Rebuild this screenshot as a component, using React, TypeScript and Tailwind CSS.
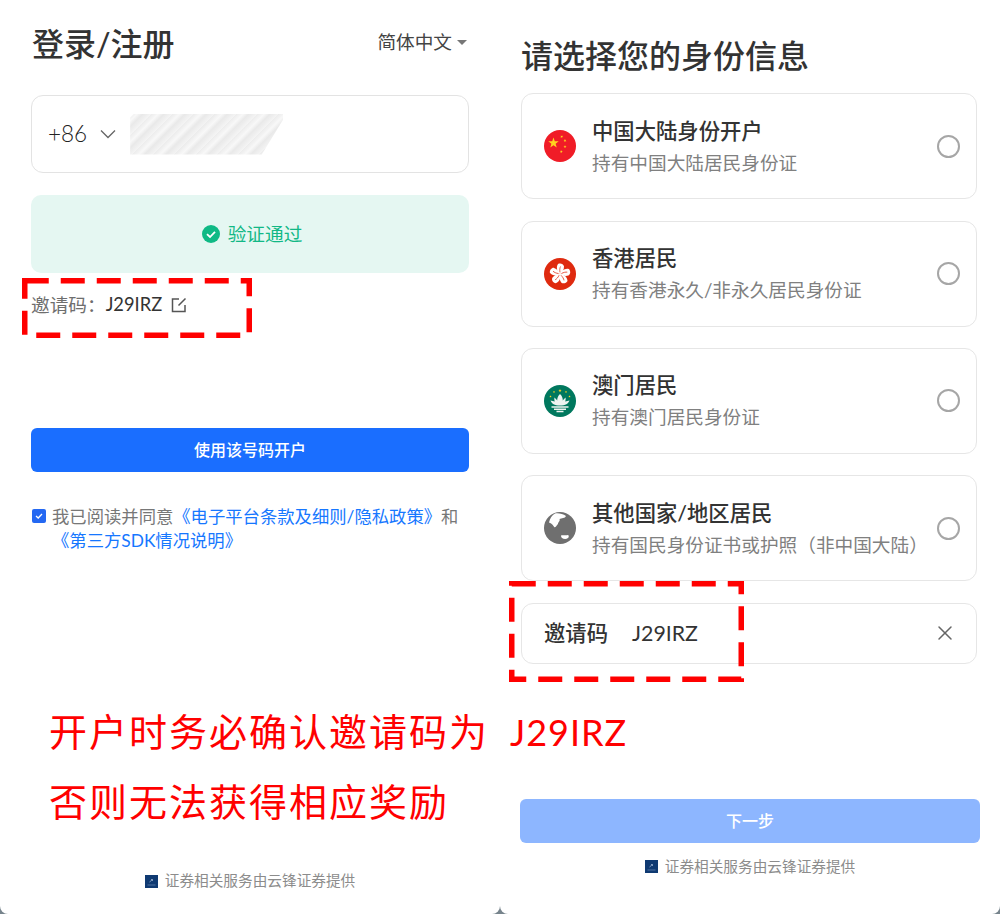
import { X } from 'lucide-react';

const FONT = "font-['Lato','Noto_Sans_CJK_SC',sans-serif]";

const identities = [
    { flag: 'cn', title: '中国大陆身份开户', desc: '持有中国大陆居民身份证' },
    { flag: 'hk', title: '香港居民', desc: '持有香港永久/非永久居民身份证' },
    { flag: 'mo', title: '澳门居民', desc: '持有澳门居民身份证' },
    { flag: 'other', title: '其他国家/地区居民', desc: '持有国民身份证书或护照（非中国大陆）' },
];

function Star({ x, y, r, rot = 0 }: { x: number; y: number; r: number; rot?: number }) {
    const pts = [];
    for (let i = 0; i < 10; i++) {
        const a = ((-90 + rot + i * 36) * Math.PI) / 180;
        const d = i % 2 === 0 ? r : r * 0.4;
        pts.push(`${x + d * Math.cos(a)},${y + d * Math.sin(a)}`);
    }
    return <polygon points={pts.join(' ')} fill="#ffd21f" />;
}

function Flag({ type }: { type: string }) {
    if (type === 'cn') {
        return (
            <svg width="32" height="32" viewBox="0 0 32 32" className="shrink-0">
                <circle cx="16" cy="16" r="16" fill="#f01c27" />
                <Star x={9.5} y={13} r={5.5} />
                <Star x={17.7} y={6.7} r={1.6} rot={20} />
                <Star x={21} y={10.7} r={1.6} rot={40} />
                <Star x={21} y={16.7} r={1.6} />
                <Star x={17.3} y={21.7} r={1.6} rot={20} />
            </svg>
        );
    }
    if (type === 'hk') {
        return (
            <svg width="32" height="32" viewBox="0 0 32 32" className="shrink-0">
                <circle cx="16" cy="16" r="16" fill="#df2a0f" />
                {[0, 72, 144, 216, 288].map((r) => (
                    <g key={r} transform={`rotate(${r} 16 16)`}>
                        <path d="M16 16C13 13.500 11.800 9.500 14 6C16.500 4.800 19.500 6 20 8.500C20 11.500 18.500 14 16 16Z" fill="#fff" />
                        <path d="M16 14.500C15.500 12 15.800 10 16.500 8.500" fill="none" stroke="#df2a0f" strokeWidth="0.700" />
                    </g>
                ))}
            </svg>
        );
    }
    if (type === 'mo') {
        return (
            <svg width="32" height="32" viewBox="0 0 32 32" className="shrink-0">
                <circle cx="16" cy="16" r="16" fill="#00785e" />
                <Star x={16} y={5.500} r={1.700} />
                <Star x={10} y={7} r={1.200} />
                <Star x={22} y={7} r={1.200} />
                <Star x={6.500} y={11.500} r={1.200} />
                <Star x={25.500} y={11.500} r={1.200} />
                <path d="M16 9C13.500 11.500 13 14 13.300 15.500L10.500 12.500C10.200 14 10.300 15 10.800 16.500L6.500 15.500C7.500 18.500 10.500 20.500 16 20.500C21.500 20.500 24.500 18.500 25.500 15.500L21.200 16.500C21.700 15 21.800 14 21.500 12.500L18.700 15.500C19 14 18.500 11.500 16 9Z" fill="#eef4f1" />
                <path d="M7.500 22H24.500M10 24.300H22M12.500 26.600H19.500" stroke="#eef4f1" strokeWidth="1.500" />
            </svg>
        );
    }
    return (
        <svg width="32" height="32" viewBox="0 0 32 32" className="shrink-0">
            <circle cx="16" cy="16" r="16" fill="#6f6f6f" />
            <path d="M11 1.500C15 1 19 2 22 4C21 6.500 17.500 6 15.500 7C16.500 9 14 10 14 12C12 14 11 17 9.500 14C8.500 12 6.500 11 5 10.500C6 6 8 3 11 1.500Z" fill="#fff" />
            <path d="M17 23.500C19 22.500 21.500 24 24 23C25 23.500 25 25 24 26C22 27.500 19.500 27 18 26C17.500 25.500 17 24.500 17 23.500Z" fill="#fff" />
        </svg>
    );
}

function Provider() {
    return (
        <div className="flex items-center justify-center gap-[7px] text-[14.67px] leading-[20px] text-[#8c8c8c]">
            <svg width="13" height="13" viewBox="0 0 13 13">
                <rect width="13" height="13" fill="#0f3a72" />
                <path d="M4.500 7L7.500 4.500M6 4.500H7.500V6" fill="none" stroke="#9db4d2" strokeWidth="0.800" />
                <path d="M2.500 10H10.500" stroke="#5f80ab" strokeWidth="0.800" />
            </svg>
            <span>证券相关服务由云锋证券提供</span>
        </div>
    );
}

function DashedBox({ className, width, height }: { className: string; width: number; height: number }) {
    return (
        <svg width={width} height={height} className={`pointer-events-none absolute ${className}`}>
            <rect
                x="2.75"
                y="2.75"
                width={width - 5.5}
                height={height - 5.5}
                fill="none"
                stroke="#ff0000"
                strokeWidth="5.500"
                strokeDasharray="24 12"
            />
        </svg>
    );
}

export default function App() {
    return (
        <div className={`relative flex h-[914px] w-[1000px] overflow-hidden bg-[#77848c] ${FONT}`}>
            {/* Login */}
            <div className="flex h-full w-[500px] flex-col rounded-b-[8px] bg-white pl-[31px] pr-[31px]">
                <div className="mt-[20px] flex h-[48px] items-center justify-between">
                    <h1 className="pl-[1px] text-[32px] font-medium leading-[48px] text-[#333333]">登录/注册</h1>
                    <button className="flex items-center gap-[5px] pb-[4px] pr-[2px] text-[18.67px] leading-[28px] text-[#444444]">
                        简体中文
                        <span className="h-0 w-0 border-x-[5px] border-t-[5px] border-x-transparent border-t-[#777777]" />
                    </button>
                </div>

                <div className="mt-[27px] flex h-[78px] items-center rounded-[12px] border border-[#e3e3e3] pl-[16px]">
                    <span className="text-[22.5px] font-light leading-[30px] text-[#222222]">+86</span>
                    <svg width="16" height="10" viewBox="0 0 16 10" className="ml-[13px]">
                        <path d="M1 1.500L8 8.500L15 1.500" fill="none" stroke="#666666" strokeWidth="1.300" />
                    </svg>
                    <div className="ml-[14px] h-[41px] w-[153px] bg-[repeating-linear-gradient(135deg,#ececec_0px,#f8f8f8_5px,#e9e9e9_9px,#f4f4f4_15px)] [clip-path:polygon(4px_0,100%_0,100%_6px,86%_100%,0_100%,0_4px)]" />
                </div>

                <div className="mt-[22px] flex h-[78px] items-center justify-center gap-[8px] rounded-[10px] bg-[#e5f7f2] pl-[4px] text-[18.67px] text-[#12b886]">
                    <svg width="18" height="18" viewBox="0 0 18 18">
                        <circle cx="9" cy="9" r="9" fill="#0fb985" />
                        <path d="M5 9.200L8 12L13 6.800" fill="none" stroke="#fff" strokeWidth="1.800" />
                    </svg>
                    <span>验证通过</span>
                </div>

                <div className="mt-[18px] flex h-[28px] items-center text-[18.67px] text-[#333333]">
                    <span className="text-[#6e6e6e]">邀请码：</span>
                    <span className="text-[18.3px]">J29IRZ</span>
                    <svg width="16" height="16" viewBox="0 0 16 16" className="ml-[9px]">
                        <path d="M8 2H1.500V14.500H14V8M14.500 1.500L7.500 8.500" fill="none" stroke="#555555" strokeWidth="1.500" />
                    </svg>
                </div>

                <button className="mt-[109px] h-[44px] rounded-[6px] bg-[#1a6eff] text-[16px] font-medium text-white">
                    使用该号码开户
                </button>

                <div className="relative mt-[33px] pl-[21px] text-[17.33px] leading-[24px] text-[#777777]">
                    <span className="absolute left-[1px] top-[4px] flex h-[14px] w-[14px] items-center justify-center rounded-[2px] bg-[#2468f2]">
                        <svg width="10" height="10" viewBox="0 0 10 10">
                            <path d="M2 5L4.200 7L8 3" fill="none" stroke="#fff" strokeWidth="1.300" />
                        </svg>
                    </span>
                    我已阅读并同意<span className="text-[#1677ff]">《电子平台条款及细则/隐私政策》</span>和
                    <br />
                    <span className="text-[#1677ff]">《第三方SDK情况说明》</span>
                </div>

                <div className="mt-auto pb-[23px]">
                    <Provider />
                </div>
            </div>

            {/* Identity */}
            <div className="flex h-full w-[500px] flex-col rounded-b-[8px] bg-white pl-[21px] pr-[23px]">
                <h1 className="mt-[32px] text-[32px] font-medium leading-[48px] text-[#333333]">请选择您的身份信息</h1>

                <div className="mt-[13.2px] flex flex-col gap-[21.4px]">
                    {identities.map((item) => (
                        <div
                            key={item.flag}
                            className="flex h-[106px] items-center rounded-[12px] border border-[#e6e6e6] pl-[22px] pr-[16px]"
                        >
                            <Flag type={item.flag} />
                            <div className="ml-[16px] flex-1">
                                <div className="text-[21.33px] font-medium leading-[32px] text-[#333333]">{item.title}</div>
                                <div className="mt-[1px] text-[18.67px] leading-[30px] text-[#808080]">{item.desc}</div>
                            </div>
                            <span className="h-[23px] w-[23px] rounded-full border-2 border-[#a6a6a6]" />
                        </div>
                    ))}
                </div>

                <div className="mt-[21.6px] flex h-[61px] items-center rounded-[12px] border border-[#e6e6e6] pl-[22px] pr-[19px]">
                    <span className="pt-[2px] text-[21.33px] font-medium text-[#333333]">邀请码</span>
                    <span className="ml-[24px] flex-1 pt-[2px] text-[21.33px] text-[#333333]">J29IRZ</span>
                    <X size={24} strokeWidth={1.5} className="text-[#666666]" />
                </div>

                <button className="-ml-[1px] -mr-[3px] mt-[135px] h-[44px] rounded-[6px] bg-[#8db6ff] text-[16px] font-medium text-white">
                    下一步
                </button>

                <div className="mt-[14px] pl-[2px]">
                    <Provider />
                </div>
            </div>

            {/* Annotations */}
            <DashedBox className="left-[22px] top-[278px]" width={230} height={60} />
            <DashedBox className="left-[509px] top-[581px]" width={235} height={101} />
            <div className="pointer-events-none absolute left-[49px] top-[697px] text-[38px] leading-[69px] tracking-[2px] text-[#ff0000]">
                <div className="flex items-baseline whitespace-nowrap">
                    <span>开户时务必确认邀请码为</span>
                    <span className="ml-[21px] text-[36px] tracking-[1px]">J29IRZ</span>
                </div>
                <div className="whitespace-nowrap">否则无法获得相应奖励</div>
            </div>
        </div>
    );
}
